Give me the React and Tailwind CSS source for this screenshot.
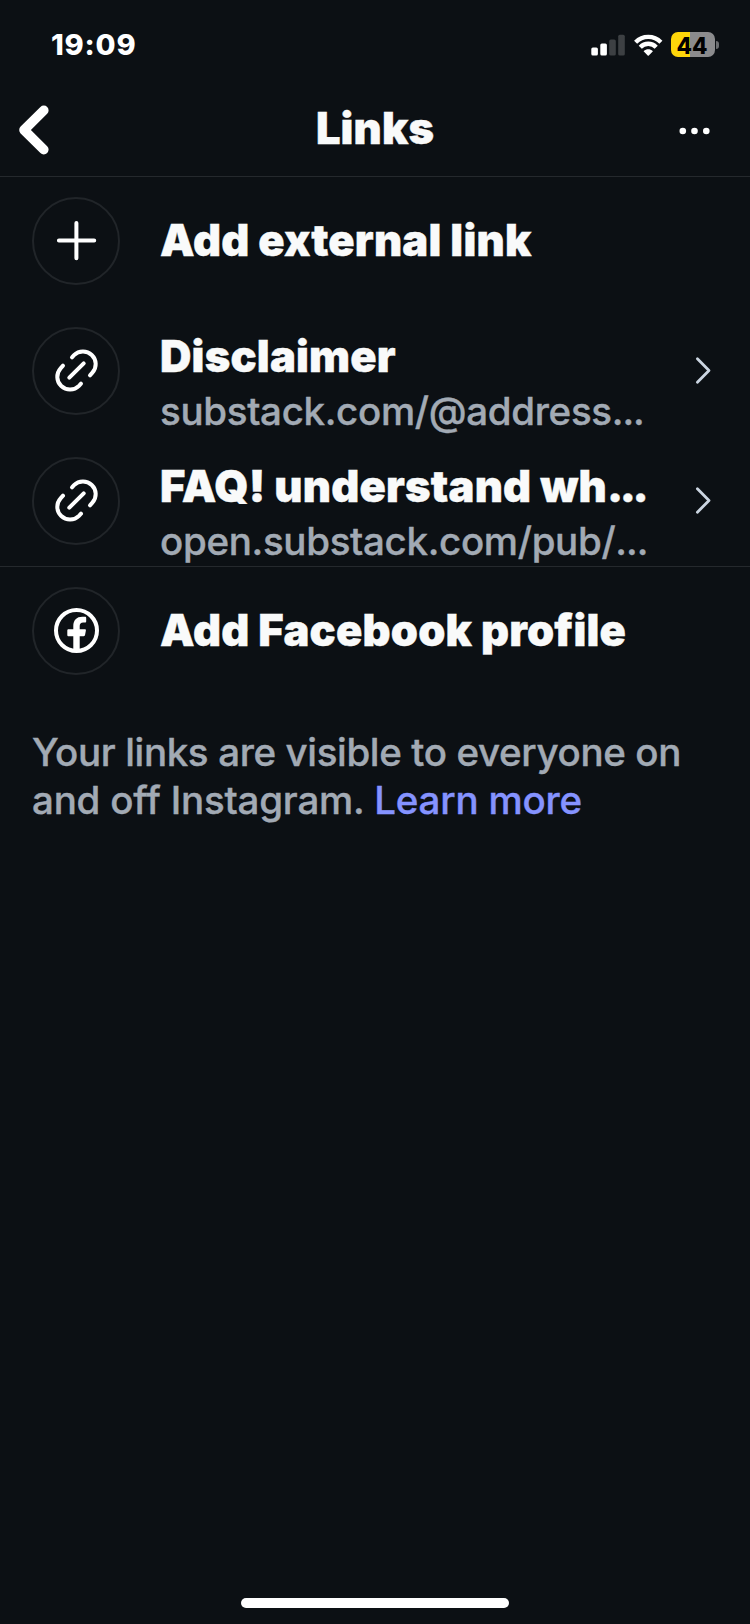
import React from "react";

function LinkIcon() {
  return (
    <svg className="size-[48px]" viewBox="0 0 48 48" fill="none" stroke="#fff" strokeWidth="4" strokeLinecap="round">
      <path d="M20 10.3l2-2.1A12.7 12.7 0 0 1 40.4 25.7L38 28.3" />
      <path d="M29 36.7l-2 2.1A12.7 12.7 0 0 1 8.6 21.3L11 18.7" />
      <path d="M17.3 30.7L31.7 16.3" />
    </svg>
  );
}

function PlusIcon() {
  return (
    <svg className="size-[48px]" viewBox="0 0 48 48" fill="none" stroke="#fff" strokeWidth="4" strokeLinecap="round">
      <path d="M24.4 5.9v35.3M6.9 23.5h35.3" />
    </svg>
  );
}

function FacebookIcon() {
  return (
    <svg className="size-[48px]" viewBox="0 0 48 48" fill="none">
      <circle cx="24.5" cy="23.5" r="20.5" stroke="#fff" strokeWidth="4" />
      <path
        fill="#fff"
        d="M21.3 44.5V29.3h-4.6c-.9 0-1.4-.5-1.4-1.4v-4.2c0-.9.5-1.4 1.4-1.4h4.6v-3.2c0-6 3.3-9.4 9-9.4h2.7c.8 0 1.2.4 1.2 1.2v3.4c0 .8-.4 1.2-1.2 1.2h-1.8c-2.4 0-3.5 1.2-3.5 3.5v3.3h5c.9 0 1.3.5 1.2 1.3l-.8 4.2c-.1.9-.6 1.4-1.5 1.4h-3.9v15.2z"
      />
    </svg>
  );
}

function ChevronIcon() {
  return (
    <svg className="h-[30px] w-[20px]" viewBox="0 0 20 30" fill="none" stroke="#cbd5e1" strokeWidth="2.8" strokeLinecap="round" strokeLinejoin="round">
      <path d="M3.4 2.8L15 14.5L3.4 26.2" />
    </svg>
  );
}

function Row({ icon, title, titleCut, subtitle }) {
  return (
    <div className="flex h-[130px] items-center pr-[36px] pl-8">
      <div className="flex size-[88px] shrink-0 items-center justify-center rounded-full border-2 border-[#212529]">{icon}</div>
      <div className={subtitle ? "flex-1 self-start pt-[23px] pl-10" : "flex-1 pb-[2px] pl-10"}>
        <div className="text-[43.5px] leading-[54px] font-black tracking-[0.18px] whitespace-nowrap text-[#f9fafa] [-webkit-text-stroke:0.4px_#f9fafa]">
          {title}
          {titleCut && <span className="tracking-[-3.4px]">...</span>}
        </div>
        {subtitle && (
          <div className="text-[38.5px] leading-[56px] font-medium tracking-[-0.32px] whitespace-nowrap text-[#a2aab4] [-webkit-text-stroke:0.4px_#a2aab4]">
            {subtitle}
            <span className="tracking-[-1px]">...</span>
          </div>
        )}
      </div>
      {subtitle && <ChevronIcon />}
    </div>
  );
}

function StatusBar() {
  return (
    <div className="flex h-[81px] items-center justify-between pt-2 pr-[31px] pl-[51px]">
      <div className="text-[29px] leading-8 font-extrabold tracking-[0.8px] text-white">19:09</div>
      <div className="flex items-center">
        <svg className="h-[22px] w-[34px]" viewBox="0 0 34 22">
          <rect x="0.3" y="13.5" width="6.6" height="8" rx="1.6" fill="#fff" />
          <rect x="9.3" y="9.5" width="6.6" height="12" rx="1.6" fill="#fff" />
          <rect x="18.2" y="5.5" width="6.6" height="16" rx="1.6" fill="#3d4043" />
          <rect x="27.2" y="0.7" width="6.6" height="20.8" rx="1.6" fill="#3d4043" />
        </svg>
        <svg className="ml-[9px] h-[22px] w-[29px]" viewBox="0 0 29 22" fill="none" stroke="#fff" strokeWidth="4.3">
          <path d="M1.6 8.2C8.6 1.1 19.9 1.1 26.9 8.2" />
          <path d="M6.3 13.2C10.6 8.6 17.9 8.6 22.2 13.2" />
          <path fill="#fff" stroke="none" d="M9.8 17c2.5-2.2 6.4-2.2 8.9 0 .2.2.2.4 0 .6l-3.9 3.8c-.3.3-.8.3-1.1 0l-3.9-3.8c-.2-.2-.2-.4 0-.6z" />
        </svg>
        <div className="ml-2 flex h-[25px] w-[44px] items-center justify-center rounded-[7px] bg-[linear-gradient(to_right,#ffd60a_19px,#8b8b8d_19px)] pt-px pr-[2px] text-[22.5px] leading-[25px] font-extrabold text-black">
          44
        </div>
        <div className="ml-px h-2 w-[3px] rounded-r-full bg-[#6b6d70]" />
      </div>
    </div>
  );
}

export default function App() {
  return (
    <div className="flex h-[1624px] w-[750px] flex-col overflow-hidden bg-[#0c1014] font-['Inter',sans-serif]">
      <StatusBar />
      <div className="grid h-[96px] grid-cols-[1fr_auto_1fr] items-center border-b border-[#25292d]">
        <div className="pt-[3px] pl-[18px]">
          <svg className="block h-[52px] w-[32px]" viewBox="0 0 32 52" fill="none" stroke="#fff" strokeWidth="9.6" strokeLinecap="round" strokeLinejoin="round">
            <path d="M25.8 6.4L6 26L25.8 45.6" />
          </svg>
        </div>
        <div className="pb-[2px] text-[43.5px] leading-[54px] font-black tracking-[0.1px] text-[#f9fafa] [-webkit-text-stroke:0.4px_#f9fafa]">Links</div>
        <div className="flex justify-end pt-[5px] pr-[39px]">
          <svg className="h-2 w-[32px]" viewBox="0 0 32 8" fill="#fff">
            <circle cx="3.8" cy="4" r="3.3" />
            <circle cx="15.5" cy="4" r="3.3" />
            <circle cx="27.3" cy="4" r="3.3" />
          </svg>
        </div>
      </div>
      <div className="-mt-px border-b border-[#25292d]">
        <Row icon={<PlusIcon />} title="Add external link" />
        <Row icon={<LinkIcon />} title="Disclaimer" subtitle="substack.com/@address" />
        <Row icon={<LinkIcon />} title="FAQ! understand wh" titleCut subtitle="open.substack.com/pub/" />
      </div>
      <div className="-mt-px">
        <Row icon={<FacebookIcon />} title="Add Facebook profile" />
      </div>
      <div className="pt-8 pl-8 text-[38.5px] leading-[48px] font-medium whitespace-nowrap text-[#a2aab4] [-webkit-text-stroke:0.4px_currentColor]">
        <div className="tracking-[-0.36px]">Your links are visible to everyone on</div>
        <div className="tracking-[-0.2px]">
          and off Instagram. <span className="text-[#8593ff]">Learn more</span>
        </div>
      </div>
      <div className="mx-auto mt-auto mb-4 h-[10px] w-[268px] shrink-0 rounded-full bg-white" />
    </div>
  );
}
